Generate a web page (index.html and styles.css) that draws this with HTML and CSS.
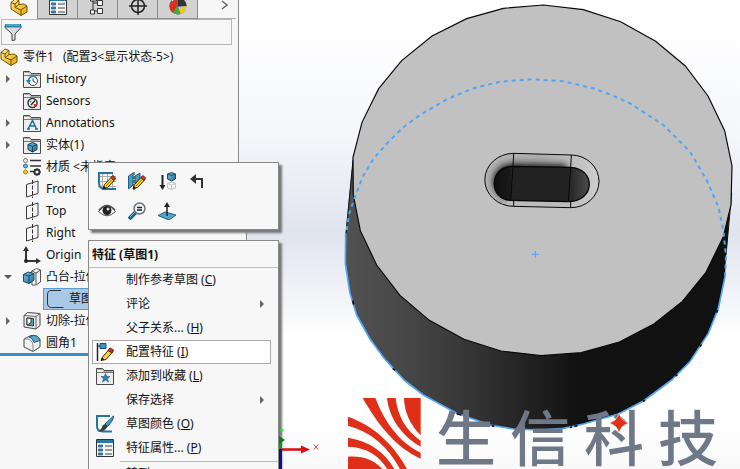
FILE: index.html
```html
<!DOCTYPE html>
<html lang="zh-CN">
<head>
<meta charset="utf-8">
<title>零件1</title>
<link rel="stylesheet" href="styles.css">
</head>
<body>
<svg class="defs" aria-hidden="true">
  <defs>
    <linearGradient id="gold" x1="0" y1="0" x2="1" y2="1"><stop offset="0" stop-color="#ffe98a"/><stop offset="1" stop-color="#e8a80c"/></linearGradient>
    <linearGradient id="steel" x1="0" y1="0" x2="1" y2="1"><stop offset="0" stop-color="#7cc0de"/><stop offset="1" stop-color="#1f6f98"/></linearGradient>
    <symbol id="part" viewBox="0 0 18 18"><g stroke="#6e5200" stroke-linejoin="round"><path d="M1 4.500 5 1l4 1.500v4L14 6l3 2v6l-6 3.500L1 11z" fill="url(#gold)"/><path d="M1 4.500 5 6v3.500L11 12v5.500M5 6l4-3.500M5 9.500 9 6.500M11 12l6-4" fill="none"/></g></symbol>
    <symbol id="folder" viewBox="0 0 18 18"><path d="M.5 17.500V1.500h6l1.500 2h9.500v14z" fill="#eee" stroke="#4a4a4a"/><path d="M1 5.500h16" stroke="#777"/><path d="M1.500 2.500h5l1 2h9" stroke="#aaa" fill="none"/></symbol>
    <symbol id="history" viewBox="0 0 18 18"><use href="#folder"/><circle cx="10" cy="11" r="4.500" fill="#fff" stroke="#444"/><path d="M10 8.500V11l2.500 1.500" fill="none" stroke="#333"/><path d="M3 10h5l-2.500 4z" fill="#2684b4"/><path d="M5.500 11a4.500 4.500 0 0 1 8-3" fill="none" stroke="#2684b4" stroke-width="1.500"/></symbol>
    <symbol id="sensors" viewBox="0 0 18 18"><use href="#folder"/><circle cx="9.500" cy="11" r="4.500" fill="#fff" stroke="#333" stroke-width="1.500"/><path d="M8 13l4-4.500" stroke="#222" stroke-width="1.500"/><path d="M10.500 12h3.500a4.500 4.500 0 0 1-3 3z" fill="#e33b22"/><circle cx="7.500" cy="9.500" r="1" fill="#2684b4"/></symbol>
    <symbol id="notes" viewBox="0 0 18 18"><use href="#folder"/><path d="M5 15l4.500-8.500L13.500 15M6.500 12h5.500M4 15h3M12 15h3" fill="none" stroke="#1f7099" stroke-width="1.500"/></symbol>
    <symbol id="solids" viewBox="0 0 18 18"><use href="#folder"/><path d="M5 8.500 9.500 6.500 14 8.500v5L9.500 16 5 13.500z" fill="url(#steel)" stroke="#123f58"/><path d="M5 8.500l4.500 2 4.500-2M9.500 10.500V16" fill="none" stroke="#123f58"/></symbol>
    <symbol id="material" viewBox="0 0 18 18"><path d="M7 2.500h11M7 8h11M7 13.500h4" stroke="#333" stroke-width="1.500"/><circle cx="2.500" cy="2.500" r="2" fill="#fff" stroke="#8a6464"/><circle cx="2.500" cy="8" r="2" fill="#5fc0ea" stroke="#226a92"/><circle cx="2.500" cy="14" r="2" fill="#ffc91a" stroke="#b58600"/><circle cx="14" cy="14" r="2.500" fill="none" stroke="#333" stroke-width="2"/><path d="M14 10v8M10 14h8M11 11l6 6M17 11l-6 6" stroke="#333" stroke-dasharray="2 4"/></symbol>
    <symbol id="plane" viewBox="0 0 18 18"><path d="M3.500 4.500 15 1v12.500L3.500 17z" fill="none" stroke="#3a3a3a"/><path d="M9.500 0v18" stroke="#333" stroke-dasharray="4 1.500"/></symbol>
    <symbol id="origin" viewBox="0 0 18 18"><path d="M3 3v12h12" fill="none" stroke="#333" stroke-width="2"/><path d="M0 5l3-5 3 5zM13 12l5 3-5 3z" fill="#333"/><circle cx="3" cy="15" r="2" fill="#222"/></symbol>
    <symbol id="boss" viewBox="0 0 18 18"><path d="M8.500 3l5-2.500 4 1.500v12l-4.500 3H9z" fill="#f4f4f4" stroke="#555"/><path d="M13 5v11.500M13 5l4.500-3M9 3l4 2" fill="none" stroke="#555"/><path d="M.5 6.500 5 4l6 1.500V12l-5 3.500-5.500-2z" fill="url(#steel)" stroke="#164c6b"/><path d="M.5 6.500 6 8v7.500M6 8l5-2.500" fill="none" stroke="#164c6b"/></symbol>
    <symbol id="sketch" viewBox="0 0 18 18"><path d="M15 .5H5Q1.500.5 1.500 5v8q0 4.500 4 4.500h12" fill="none" stroke="#333"/></symbol>
    <symbol id="cut" viewBox="0 0 18 18"><path d="M1 3.500 4.500.5 17 1.500v12L13 17 1 15z" fill="#eee" stroke="#444"/><path d="M1 3.500l12 1V17M13 4.500l4-3" fill="none" stroke="#666"/><path d="M4 6l6.500.5V14L4 13z" fill="#5ba6c9" stroke="#333"/><path d="M8 6.500v4.500l-4 2V6z" fill="#fff" stroke="#333"/></symbol>
    <symbol id="fillet" viewBox="0 0 18 18"><path d="M1 5 8 1.500q6-1 9 4V13l-7 4.500L1 13z" fill="#f2f2f2" stroke="#444"/><path d="M6 3l4-1.500q6 0 7 5L11 8.500Q10 4 6 3z" fill="#5ba6c9" stroke="#245d7c"/><path d="M1 5q8-1 9 6v6.500" fill="none" stroke="#888"/></symbol>
    <symbol id="pencil" viewBox="0 0 18 18"><path d="M5 17l1.500-4.500L14 4.500l3 3-7.500 8z" fill="#ffcf33" stroke="#3a2b00"/><path d="M13 5.500 15 3.500l2.500 2.500-2 2.500z" fill="#d8352a" stroke="#6b1b16"/><path d="M5 17l1-3 2 2z" fill="#111"/><path d="M8 14l6-6.500" stroke="#a87400"/></symbol>
    <symbol id="edit-sketch" viewBox="0 0 18 18"><path d="M4.500 0v18M9.500 0v18M14.500 0v18M0 4.500h18M0 9.500h18M0 14.500h18" stroke="#aaa"/><path d="M15 1H1v10q0 6 6 6h11" fill="none" stroke="#23779f" stroke-width="2"/><use href="#pencil"/></symbol>
    <symbol id="edit-feature" viewBox="0 0 18 18"><path d="M.5 4l4.500-3v12l-4.500 4zM7 4l5-3v10l-5 5z" fill="#4a9cc2" stroke="#1d5f82"/><path d="M6 0v18" stroke="#222" stroke-dasharray="3 1"/><use href="#pencil"/></symbol>
    <symbol id="suppress" viewBox="0 0 18 18"><path d="M4.500 3v12" stroke="#222" stroke-width="2"/><path d="M1.500 13h6l-3 5z" fill="#222"/><path d="M9.500 2 13.500.5l4 1.500v5l-4 2-4-2z" fill="url(#steel)" stroke="#164c6b"/><path d="M9.500 2l4 1.500 4-1.500" fill="none" stroke="#164c6b"/><path d="M9.500 11.500l4-1.500 4 1.500V16l-4 1.500-4-1.500zM9.500 11.500l4 1.500 4-1.500M13.500 13v4.500" fill="none" stroke="#c4c4c4"/></symbol>
    <symbol id="rollback" viewBox="0 0 18 18"><path d="M4 7h10v9" fill="none" stroke="#333" stroke-width="2"/><path d="M2 7l6-5v10z" fill="#333"/></symbol>
    <symbol id="eye" viewBox="0 0 18 18"><path d="M.5 9.500Q9-1 17.500 9.500 9 18 .5 9.500z" fill="#fff" stroke="#555"/><path d="M1 8Q9-1 17 8" fill="none" stroke="#555" stroke-width="1.500"/><circle cx="9" cy="8.500" r="4.500" fill="#222"/><circle cx="10" cy="7" r="1.500" fill="#ddd"/></symbol>
    <symbol id="magnify" viewBox="0 0 18 18"><path d="M8 10l-7 7" stroke="#1d6288" stroke-width="4"/><path d="M7 10l-5 5" stroke="#6bb4d6"/><circle cx="11.500" cy="6.500" r="5.500" fill="#eef4f7" stroke="#6d7478" stroke-width="1.500"/><path d="M9 5.500h5M9 8h5" stroke="#222" stroke-width="1.500"/></symbol>
    <symbol id="normal-to" viewBox="0 0 18 18"><path d="M0 13.500 7 10l11 3-7 5z" fill="#54a5ca" stroke="#1d6288"/><path d="M9 3v11" stroke="#222" stroke-width="1.500"/><path d="M6 5l3-5 3 5z" fill="#222"/></symbol>
    <symbol id="configure" viewBox="0 0 18 18"><path d="M1.500 0v18" stroke="#222" stroke-width="1.500"/><path d="M2 3h2" stroke="#222"/><path d="M4 .5h6v5H4z" fill="#3d94bd" stroke="#164c6b"/><path d="M5 17.500l1.500-3.500L13 6.500l4 2-7 8z" fill="#ffcf33" stroke="#3a2b00"/><path d="M12 7.500 14 5l3.500 2-1.500 3z" fill="#d8352a" stroke="#6b1b16"/><path d="M5 17.500l1-3 2.500 2z" fill="#111"/></symbol>
    <symbol id="favorite" viewBox="0 0 18 18"><use href="#folder"/><path d="M9.500 6.500l1.300 3h3.200l-2.500 2.200 1 3.300-3-2-3 2 1-3.300L5 9.500h3.200z" fill="#2684b4" stroke="#164c6b" stroke-width=".5"/></symbol>
    <symbol id="sketch-color" viewBox="0 0 18 18"><path d="M14 1H1v10q0 5.500 6 5.500h9" fill="none" stroke="#23779f" stroke-width="2"/><path d="M17.500 1 9 9l2.500 2.500q5-5 6-9z" fill="#4b9fc6" stroke="#1d4f6c"/><path d="M9 9l2.500 2.500Q9 17 2 16.500 6 14 6.500 10.500z" fill="#3c3c3c"/></symbol>
    <symbol id="properties" viewBox="0 0 18 18"><path d="M.5.5h17v17H.5z" fill="#f5f5f5" stroke="#333"/><path d="M1 1h16v3H1z" fill="#2a7ba4"/><path d="M2.500 6h4v2h-4zM2.500 10h4v2h-4zM2.500 14h4v2h-4z" fill="#3d94bd" stroke="#174f6f" stroke-width=".7"/><path d="M9 7h7M9 11h7M9 15h7" stroke="#444"/></symbol>
    <symbol id="config-tree" viewBox="0 0 18 18"><path d="M4 0v16M4 6h5M4 14h5" stroke="#333" fill="none"/><path d="M1.500 0h6v4h-6zM8.500 3.500h5v5h-5zM8.500 11.500h5v5h-5zM1.500 13h4v4h-4z" fill="#f4f4f4" stroke="#333"/></symbol>
    <symbol id="target" viewBox="0 0 18 18"><circle cx="9" cy="9" r="6.500" fill="none" stroke="#222" stroke-width="1.500"/><path d="M9 0v18M0 9h18" stroke="#222" stroke-width="1.500"/></symbol>
    <symbol id="appearance" viewBox="0 0 18 18"><circle cx="9" cy="9" r="8.500" fill="#2e6fd0"/><path d="M9 9 .5 9A8.500 8.500 0 0 1 9 .5z" fill="#c93a2b"/><path d="M9 9V.5A8.500 8.500 0 0 1 17.500 9z" fill="#333"/><path d="M2 7q5-1 7 3l-2 7Q0 15 .5 9z" fill="#d92f23"/><path d="M9 10l8.500-1a8.500 8.500 0 0 1-6 8z" fill="#f5c52b"/><path d="M8 9l3.500 8A8.500 8.500 0 0 1 4 16z" fill="#4bac3c"/><path d="M3 4q2-3 5-2" fill="none" stroke="#fff"/></symbol>
    <symbol id="filter" viewBox="0 0 18 18"><path d="M1 2.500h16v2L11 11v6l-3 .5V11L1 4.500z" fill="#ddd" stroke="#444"/><path d="M1 1h16v3.500H1z" fill="#2782ae"/><path d="M2 2h14" stroke="#79c1e0"/></symbol>
  </defs>
</svg>
<main class="app">
  <aside class="panel">
    <nav class="tabs" aria-label="管理器">
      <button class="tab active" aria-label="设计树"><svg><use href="#part"/></svg></button>
      <button class="tab" aria-label="属性"><svg><use href="#properties"/></svg></button>
      <button class="tab" aria-label="配置"><svg><use href="#config-tree"/></svg></button>
      <button class="tab" aria-label="尺寸"><svg><use href="#target"/></svg></button>
      <button class="tab" aria-label="外观"><svg><use href="#appearance"/></svg></button>
      <button class="more" aria-label="更多"><svg viewBox="0 0 8 10"><path d="M1 1l5 4-5 4" fill="none" stroke="#666" stroke-width="1.500"/></svg></button>
    </nav>
    <label class="filter"><svg><use href="#filter"/></svg><input type="text" aria-label="过滤"></label>
    <ul class="tree">
      <li class="root"><svg><use href="#part"/></svg><span>零件1</span><span>(配置3&lt;显示状态-5&gt;)</span></li>
      <li><i class="closed"></i><svg><use href="#history"/></svg><span>History</span></li>
      <li><i></i><svg><use href="#sensors"/></svg><span>Sensors</span></li>
      <li><i class="closed"></i><svg><use href="#notes"/></svg><span>Annotations</span></li>
      <li><i class="closed"></i><svg><use href="#solids"/></svg><span>实体(1)</span></li>
      <li><i></i><svg><use href="#material"/></svg><span>材质 &lt;未指定&gt;</span></li>
      <li><i></i><svg><use href="#plane"/></svg><span>Front</span></li>
    </ul>
    <ul class="tree lower">
      <li><i></i><svg><use href="#plane"/></svg><span>Top</span></li>
      <li><i></i><svg><use href="#plane"/></svg><span>Right</span></li>
      <li><i></i><svg><use href="#origin"/></svg><span>Origin</span></li>
      <li><i class="open"></i><svg><use href="#boss"/></svg><span>凸台-拉伸1</span></li>
      <li class="selected"><svg><use href="#sketch"/></svg><span>草图1</span></li>
      <li><i class="closed"></i><svg><use href="#cut"/></svg><span>切除-拉伸1</span></li>
      <li class="last"><i></i><svg><use href="#fillet"/></svg><span>圆角1</span></li>
    </ul>
  </aside>
  <section class="viewport">
    <svg class="model" viewBox="-303 0 1503 1407" role="img" aria-label="模型">
      <defs>
        <linearGradient id="side" gradientUnits="userSpaceOnUse" x1="17" y1="0" x2="1170" y2="0"><stop offset="0" stop-color="#515151"/><stop offset=".12" stop-color="#4a4a4a"/><stop offset=".3" stop-color="#383838"/><stop offset=".6" stop-color="#121212"/><stop offset="1" stop-color="#111"/></linearGradient>
        <linearGradient id="rim" x1="0" y1="0" x2="1" y2="0"><stop offset="0" stop-color="#b4b4b4"/><stop offset=".5" stop-color="#acacac"/><stop offset="1" stop-color="#cecece"/></linearGradient>
        <linearGradient id="pocket" x1="0" y1="0" x2="1" y2="0"><stop offset="0" stop-color="#101010"/><stop offset=".17" stop-color="#1a1a1a"/><stop offset=".18" stop-color="#222"/><stop offset=".77" stop-color="#222"/><stop offset="1" stop-color="#4c4c4c"/></linearGradient>
        <clipPath id="slot"><path d="M521 460L694 465A84 79 0 0 1 692 623L521 619A86 79 0 0 1 521 460Z"/></clipPath>
        <filter id="soft" x="-20%" y="-30%" width="140%" height="160%"><feGaussianBlur stdDeviation="9"/></filter>
      </defs>
      <path d="M39 472L17 700 16 790 30 880 50 945 90 1017 130 1072 192 1140 250 1185 350 1240 450 1275 520 1287 600 1290 670 1285 730 1272 835 1242 910 1203 995 1140 1050 1085 1105 1000 1135 925 1155 830L1158 770 1176 560Z" fill="url(#side)"/>
      <path d="M39 480L17 710M1175 580L1158 765" fill="none" stroke="#111" stroke-width="3"/>
      <polygon points="610,15 730,29 842,65 947,124 1036,198 1104,288 1154,392 1176,498 1173,615 1150,710 1098,817 1027,904 940,973 838,1026 724,1058 603,1067 483,1053 372,1018 268,961 180,886 110,795 61,692 40,585 39,472 66,367 116,266 185,182 276,108 380,56 490,25" fill="#c1c1c1" stroke="#090909" stroke-width="3.500"/>
      <path id="base-edge" d="M17 700L16 790 30 880 50 945 90 1017 130 1072 192 1140 250 1185 350 1240 450 1275 520 1287 600 1290 670 1285 730 1272 835 1242 910 1203 995 1140 1050 1085 1105 1000 1135 925 1155 830" fill="none" stroke="#4fa5fb" stroke-width="5" stroke-linejoin="round"/>
      <path d="M38 902l3 12M158 1105l8 6M350 1241l14 4M438 1272l10 3M455 1277l8 2M690 1282l6-1M703 1279l10-2M909 1204l6-3M1007 1128l5-4M1080 1040l4-7M1130 938l3-8" fill="none" stroke="#111" stroke-width="5"/>
      <path d="M20 690L28 640 45 590 68 530 100 477 150 420 195 378 240 345 320 298 400 265 480 245 575 238 670 244 760 265 815 285 870 310 970 375 1050 455 1100 540 1135 620 1150 690 1158 770 1155 830" fill="none" stroke="#4fa5fb" stroke-width="6" stroke-dasharray="12 12"/>
      <path d="M576 763h21M586 753v21" stroke="#4fa5fb" stroke-width="3"/>
      <path d="M521 460L694 465A84 79 0 0 1 692 623L521 619A86 79 0 0 1 521 460Z" fill="url(#rim)"/>
      <g clip-path="url(#slot)"><path d="M515 490L680 493V590L512 595C440 592 440 496 515 490Z" fill="#222" filter="url(#soft)"/><path d="M500 612L692 616" stroke="#bbb" stroke-width="18"/></g>
      <path d="M515 499L691 502C768 505 768 605 683 605L512 601C446 598 446 502 515 499Z" fill="url(#pocket)" stroke="#050505" stroke-width="4"/>
      <path d="M521 460L694 465A84 79 0 0 1 692 623L521 619A86 79 0 0 1 521 460ZM521 460L519 499 512 601M521 601V619M694 465L692 502 685 605M692 605V623" fill="none" stroke="#080808" stroke-width="3"/>
      <g transform="translate(0 1182)" fill="#df2f19">
        <path d="M68 12H106C132 78 172 142 242 176V194C164 160 108 82 68 12Z"/>
        <path d="M141 12H167C172 62 196 109 242 140V158C184 125 147 70 141 12Z"/>
        <path d="M192 12H242V124C210 92 193 54 192 12Z"/>
        <path d="M24 68C104 95 164 156 201 225H180C144 158 94 114 24 95Z"/>
        <path d="M24 131C90 142 134 174 163 225H142C116 185 82 160 24 158Z"/>
        <path d="M24 188C70 185 103 199 127 225H24Z"/>
      </g>
    </svg>
    <div class="brand"><span>生</span><span>信</span><span>科</span><span>技</span>
      <svg class="spark" viewBox="0 0 20 20"><path d="M10 0Q12 8 20 10 12 12 10 20 8 12 0 10 8 8 10 0z" fill="#df2f19" stroke="#fff" stroke-width=".5"/></svg>
    </div>
  </section>
  <div class="quickbar" role="toolbar">
    <button aria-label="编辑草图"><svg><use href="#edit-sketch"/></svg></button>
    <button aria-label="编辑特征"><svg><use href="#edit-feature"/></svg></button>
    <button aria-label="压缩"><svg><use href="#suppress"/></svg></button>
    <button aria-label="退回"><svg><use href="#rollback"/></svg></button>
    <button aria-label="隐藏"><svg><use href="#eye"/></svg></button>
    <button aria-label="放大所选范围"><svg><use href="#magnify"/></svg></button>
    <button aria-label="正视于"><svg><use href="#normal-to"/></svg></button>
  </div>
  <div class="menu">
    <h2>特征 (草图1)</h2>
    <button><svg></svg><span>制作参考草图 (<u>C</u>)</span></button>
    <button class="sub"><svg></svg><span>评论</span></button>
    <button><svg></svg><span>父子关系... (<u>H</u>)</span></button>
    <button class="hover"><svg><use href="#configure"/></svg><span>配置特征 (<u>I</u>)</span></button>
    <button><svg><use href="#favorite"/></svg><span>添加到收藏 (<u>L</u>)</span></button>
    <button class="sub"><svg></svg><span>保存选择</span></button>
    <button><svg><use href="#sketch-color"/></svg><span>草图颜色 (<u>O</u>)</span></button>
    <button><svg><use href="#properties"/></svg><span>特征属性... (<u>P</u>)</span></button>
    <hr>
    <button><svg></svg><span>转到...</span></button>
  </div>
  <svg class="triad" viewBox="0 0 42 42" aria-hidden="true">
    <path d="M1.500 22V42" stroke="#10108e" stroke-width="3"/>
    <path d="M1.500 22V14" stroke="#0a9b23" stroke-width="3"/><path d="M0 9l6 4-6 4z" fill="#087d18"/>
    <path d="M3 22.500H24" stroke="#d90d0d" stroke-width="2.500"/><path d="M22 18.500l9 4-9 4z" fill="#d90d0d"/>
    <path d="M.5 2l2 3 2-3M2.500 5v3" fill="none" stroke="#17d732"/><path d="M35 17.500l4 5M39 17.500l-4 5" stroke="#f33"/>
  </svg>
</main>
</body>
</html>
```
FILE: styles.css
```css
* { box-sizing: border-box; }
body {
  margin: 0;
  overflow: hidden;
  color: #111;
  font: 12px/22px "Noto Sans", "Noto Sans CJK SC", sans-serif;
}
button {
  padding: 0;
  border: 0;
  background: none;
  color: inherit;
  font: inherit;
}
svg { width: 18px; height: 18px; flex: none; display: block; }
.defs { position: absolute; width: 0; height: 0; }
.app {
  position: relative;
  display: flex;
  height: 100vh;
  overflow: hidden;
  background: linear-gradient(#fff 5%, #f6f7fb 28%, #e0e4ef 50%, #f4f5f9 64%, #fff 72%, #fff 90%, #f9f9f9);
}
.panel {
  width: 239px;
  flex: none;
  display: flex;
  flex-direction: column;
  background: #f7f7f7;
  border-right: 1px solid #8a8a8a;
}
.tabs {
  display: flex;
  height: 19px;
  margin-right: 2px;
  padding-left: 1px;
}
.tab {
  display: flex;
  justify-content: center;
  align-items: flex-end;
  width: 40px;
  padding-bottom: 3px;
  overflow: hidden;
  background: #d2d2d2;
  border-right: 1px solid #8c8c8c;
  border-bottom: 1px solid #8c8c8c;
}
.tab.active { width: 37px; background: none; border-bottom: 0; }
.more {
  flex: 1;
  display: flex;
  justify-content: flex-end;
  padding: 0 7px 8px 0;
  align-items: center;
  border-bottom: 1px solid #b0b0b0;
}
.more svg { width: 8px; height: 10px; }
.filter {
  display: flex;
  align-items: center;
  height: 26px;
  margin: 0 6px 1px 1px;
  padding-left: 2px;
  border: 1px solid #b8b8b8;
}
.filter input { flex: 1; min-width: 0; border: 0; background: none; outline: none; }
.tree { margin: 0; padding: 0; list-style: none; white-space: nowrap; }
.tree li { display: flex; align-items: center; height: 22px; }
.tree svg { margin-right: 5px; }
.root span + span { margin-left: 9px; }
.tree i { width: 17px; height: 8px; margin-left: 6px; flex: none; }
.closed { background: #666; clip-path: polygon(0 0, 4px 4px, 0 8px); }
.open { background: #555; clip-path: polygon(0 2px, 8px 2px, 4px 6px); }
.tree .open { width: 19px; margin-left: 4px; }
.lower {
  width: 247px;
  flex: 1;
  z-index: 1;
  background: #f7f7f7;
  border-right: 1px solid #8a8a8a;
}
.tree .selected {
  margin-left: 43px;
  padding-left: 2px;
  background: #a8c8e6;
  border: 1px solid #5a9bd0;
}
.tree .last { height: 24px; border-bottom: 3px solid #3590cb; }
.viewport { flex: 1; position: relative; min-width: 0; }
.model { width: 100%; height: 100%; }
.brand {
  position: absolute;
  right: 22px;
  bottom: 0;
  display: flex;
  gap: 14px;
  color: #6e7887;
  font: 500 60px/68px "Noto Sans CJK SC", sans-serif;
}
.spark { position: absolute; right: 89px; top: 12px; width: 20px; height: 20px; }
.quickbar, .menu {
  position: absolute;
  left: 88px;
  z-index: 2;
  width: 191px;
  background: #f7f7f7;
  border: 1px solid #888;
  box-shadow: 3px 3px 2px #777;
}
.quickbar {
  top: 162px;
  display: grid;
  grid-template-columns: repeat(4, 30px);
  grid-auto-rows: 30px;
  padding: 3px;
}
.quickbar button { display: grid; place-items: center; }
.menu { top: 240px; }
.menu h2 {
  margin: 0;
  padding: 3px 3px 1px;
  border-bottom: 1px solid #bbb;
  font-size: 12px;
  line-height: 22px;
  font-weight: 700;
}
.menu button {
  position: relative;
  display: flex;
  align-items: center;
  gap: 12px;
  width: calc(100% - 10px);
  height: 24px;
  margin-left: 3px;
  padding-left: 3px;
  border: 1px solid transparent;
  text-align: left;
}
.menu .hover { background: #fff; border-color: #aaa; }
.sub::after {
  content: "";
  margin-left: auto;
  margin-right: 6px;
  border: 4px solid transparent;
  border-left-color: #666;
  border-right: 0;
}
.menu hr { margin: 1px 0 0 31px; border: 0; border-top: 1px solid #bbb; }
.triad {
  position: absolute;
  left: 279px;
  bottom: 0;
  z-index: 3;
  width: 42px;
  height: 42px;
}
```
